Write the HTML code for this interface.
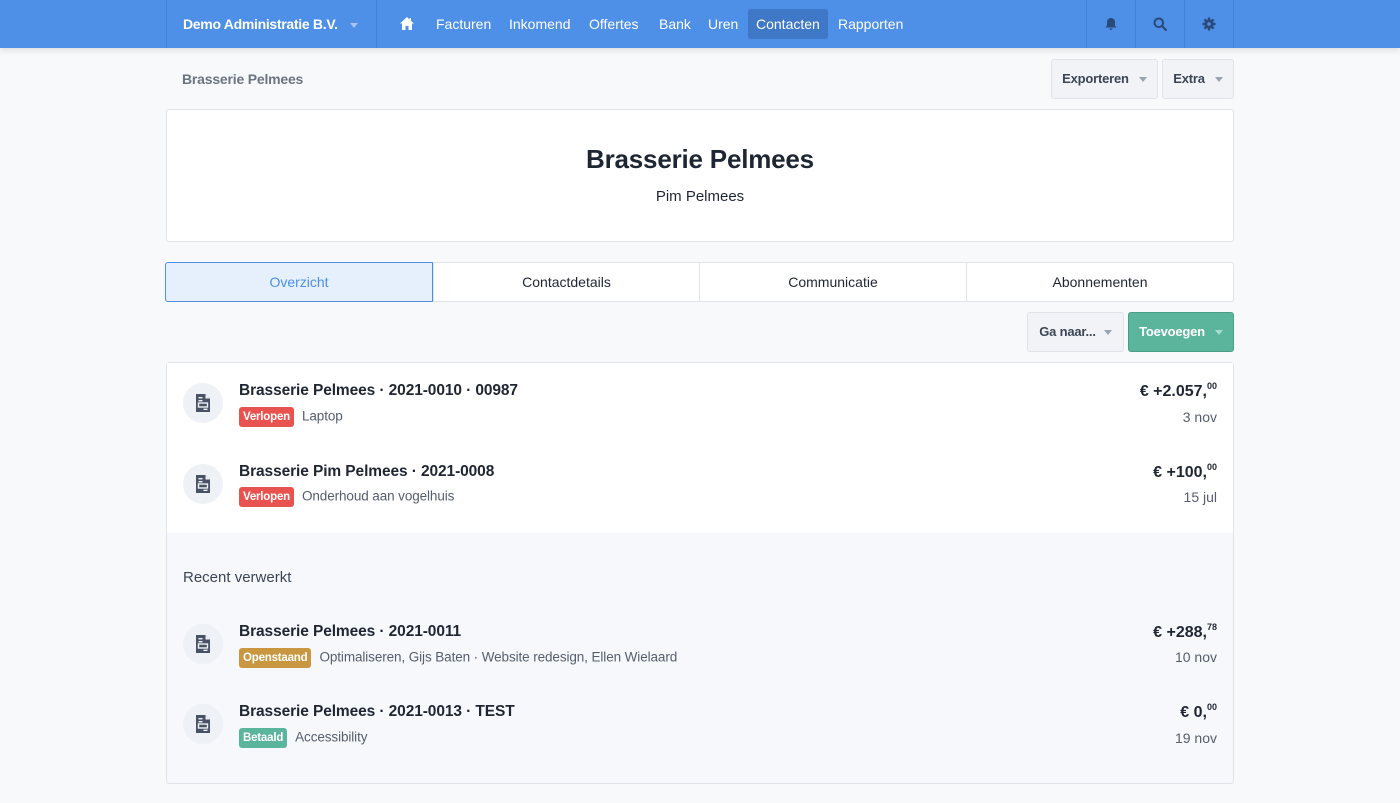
<!DOCTYPE html>
<html><head><meta charset="utf-8"><style>
*{box-sizing:border-box;margin:0;padding:0}
body{width:1400px;height:803px;overflow:hidden;background:#f8f9fb;font-family:"Liberation Sans",Arial,sans-serif;color:#1f2633;position:relative}
.a{position:absolute}
.nav{left:0;top:0;width:1400px;height:48px;background:#4e8fe8;box-shadow:0 2px 6px rgba(0,0,0,.12)}
.vl{top:0;width:1px;height:48px;background:#4580d6}
.nl{top:16px;font-size:14px;color:#fff;font-weight:500}
.caret{display:inline-block;width:0;height:0;border-left:4px solid transparent;border-right:4px solid transparent;border-top:5px solid #9aa3b0;vertical-align:middle;margin-left:8px}
.btn{height:40px;border:1px solid #dfe3ea;border-radius:3px;background:#f1f3f7;font-size:13px;color:#3c4555;font-weight:600;line-height:38px;text-align:center;letter-spacing:-0.2px}
.card{background:#fff;border:1px solid #e0e4ea;border-radius:3px}
.tab{top:262px;height:40px;background:#fff;border:1px solid #e0e4ea;font-size:14px;line-height:38px;text-align:center;color:#1f2633}
.ic{width:40px;height:40px;border-radius:50%;background:#eef1f6}
.t{font-size:15.5px;font-weight:600;color:#1f2633;letter-spacing:-0.1px}
.s{font-size:13.5px;color:#555e6d;letter-spacing:-0.1px}
.b{display:inline-block;font-size:11.5px;color:#fff;font-weight:600;padding:0 4px;height:20px;line-height:20px;border-radius:3px;margin-right:8px;vertical-align:middle;letter-spacing:-0.2px}
.amt{right:183px;font-size:16px;font-weight:600;text-align:right}
.amt sup{font-size:9px;font-weight:600;vertical-align:7px}
.dt{right:183px;font-size:14px;color:#555e6d;text-align:right}
</style></head><body>
<div class="a nav"></div>
<div class="a vl" style="left:166px"></div><div class="a vl" style="left:376px"></div>
<div class="a vl" style="left:1086px"></div><div class="a vl" style="left:1135px"></div><div class="a vl" style="left:1184px"></div><div class="a vl" style="left:1233px"></div>
<div class="a nl" style="left:183px;font-weight:600;letter-spacing:-0.3px">Demo Administratie B.V.<span class="caret" style="border-top-color:#a9c4ee;margin-left:12px"></span></div>
<svg class="a" style="left:399px;top:16px" width="16" height="15" viewBox="0 0 16 15"><path d="M8 1L1 7.5h2V14h3.5V10h3v4H13V7.5h2L12 5V2h-1.5v1.6z" fill="#fff"/></svg>
<div class="a nl" style="left:436px">Facturen</div>
<div class="a nl" style="left:509px">Inkomend</div>
<div class="a nl" style="left:589px">Offertes</div>
<div class="a nl" style="left:659px">Bank</div>
<div class="a nl" style="left:708px">Uren</div>
<div class="a" style="left:748px;top:9px;width:80px;height:30px;background:#3f78c6;border-radius:3px"></div>
<div class="a nl" style="left:756px">Contacten</div>
<div class="a nl" style="left:838px">Rapporten</div>
<svg class="a" style="left:1104px;top:17px" width="14" height="14" viewBox="0 0 14 14"><path d="M7 1c-2.5 0-4 2-4 4v3.5L1.5 10.5h11L11 8.5V5c0-2-1.5-4-4-4zM5.5 11.5a1.5 1.5 0 0 0 3 0z" fill="#2a4a78"/></svg>
<svg class="a" style="left:1153px;top:17px" width="14" height="14" viewBox="0 0 14 14"><circle cx="5.8" cy="5.8" r="4.3" fill="none" stroke="#2a4a78" stroke-width="2"/><path d="M9 9l4 4" stroke="#2a4a78" stroke-width="2.2" stroke-linecap="round"/></svg>
<svg class="a" style="left:1202px;top:17px" width="14" height="14" viewBox="0 0 14 14"><circle cx="7" cy="7" r="4.5" fill="#2a4a78"/><g stroke="#2a4a78" stroke-width="2.4"><path d="M7 0.5v13M0.5 7h13M2.4 2.4l9.2 9.2M11.6 2.4l-9.2 9.2"/></g><circle cx="7" cy="7" r="1.8" fill="#4e8fe8"/></svg>

<div class="a" style="left:182px;top:71px;font-size:14px;color:#6b7483;font-weight:600;letter-spacing:-0.2px">Brasserie Pelmees</div>
<div class="a btn" style="left:1051px;top:59px;width:107px">Exporteren<span class="caret" style="margin-left:10px"></span></div>
<div class="a btn" style="left:1162px;top:59px;width:72px">Extra<span class="caret" style="margin-left:10px"></span></div>

<div class="a card" style="left:166px;top:109px;width:1068px;height:133px"></div>
<div class="a" style="left:166px;top:144px;width:1068px;text-align:center;font-size:26px;font-weight:700;color:#1f2633;letter-spacing:-0.2px">Brasserie Pelmees</div>
<div class="a" style="left:166px;top:188px;width:1068px;text-align:center;font-size:15px;color:#1f2633">Pim Pelmees</div>

<div class="a tab" style="left:433px;width:267px">Contactdetails</div>
<div class="a tab" style="left:699px;width:268px">Communicatie</div>
<div class="a tab" style="left:966px;width:268px;border-radius:0 3px 3px 0">Abonnementen</div>
<div class="a tab" style="left:165px;width:268px;background:#e6f0fd;border-color:#4e8fe8;color:#4e8fe8;border-radius:3px 0 0 3px">Overzicht</div>

<div class="a btn" style="left:1027px;top:312px;width:97px">Ga naar...<span class="caret"></span></div>
<div class="a btn" style="left:1128px;top:312px;width:106px;background:#5bb59c;border-color:#4a9e86;color:#fff">Toevoegen<span class="caret" style="border-top-color:#a8dccd;margin-left:10px"></span></div>

<div class="a card" style="left:166px;top:362px;width:1068px;height:422px;background:#f7f8fb"></div>
<div class="a" style="left:167px;top:363px;width:1066px;height:170px;background:#fff"></div>
<div class="a" style="left:183px;top:569px;font-size:15px;color:#3c4555;font-weight:500">Recent verwerkt</div>

<div class="a ic" style="left:183px;top:383px"></div>
<div class="a ic" style="left:183px;top:464px"></div>
<div class="a ic" style="left:183px;top:624px"></div>
<div class="a ic" style="left:183px;top:704px"></div>
<svg width="0" height="0" style="position:absolute"><defs><g id="doc"><path d="M0 0h9.5l4.5 4.5V18H0z" fill="#4a5366"/><path d="M9.5 0v4.5H14" fill="#eef1f6"/><rect x="2.5" y="3" width="4" height="1.4" fill="#eef1f6"/><rect x="2.5" y="6" width="4" height="1.4" fill="#eef1f6"/><rect x="2.5" y="9" width="9" height="4" fill="none" stroke="#eef1f6" stroke-width="1.4"/><rect x="7.5" y="14.6" width="4" height="1.4" fill="#eef1f6"/></g></defs></svg>
<svg class="a" style="left:196px;top:394px" width="14" height="18"><use href="#doc"/></svg>
<svg class="a" style="left:196px;top:475px" width="14" height="18"><use href="#doc"/></svg>
<svg class="a" style="left:196px;top:635px" width="14" height="18"><use href="#doc"/></svg>
<svg class="a" style="left:196px;top:715px" width="14" height="18"><use href="#doc"/></svg>

<div class="a t" style="left:239px;top:382px">Brasserie Pelmees · 2021-0010 · 00987</div>
<div class="a s" style="left:239px;top:407px"><span class="b" style="background:#e8534f">Verlopen</span>Laptop</div>
<div class="a amt" style="top:381px">€ +2.057,<sup>00</sup></div>
<div class="a dt" style="top:409px">3 nov</div>

<div class="a t" style="left:239px;top:463px">Brasserie Pim Pelmees · 2021-0008</div>
<div class="a s" style="left:239px;top:487px"><span class="b" style="background:#e8534f">Verlopen</span>Onderhoud aan vogelhuis</div>
<div class="a amt" style="top:462px">€ +100,<sup>00</sup></div>
<div class="a dt" style="top:489px">15 jul</div>

<div class="a t" style="left:239px;top:623px">Brasserie Pelmees · 2021-0011</div>
<div class="a s" style="left:239px;top:648px"><span class="b" style="background:#c9973f">Openstaand</span>Optimaliseren, Gijs Baten · Website redesign, Ellen Wielaard</div>
<div class="a amt" style="top:622px">€ +288,<sup>78</sup></div>
<div class="a dt" style="top:649px">10 nov</div>

<div class="a t" style="left:239px;top:703px">Brasserie Pelmees · 2021-0013 · TEST</div>
<div class="a s" style="left:239px;top:728px"><span class="b" style="background:#5bb59c">Betaald</span>Accessibility</div>
<div class="a amt" style="top:702px">€ 0,<sup>00</sup></div>
<div class="a dt" style="top:730px">19 nov</div>
</body></html>
